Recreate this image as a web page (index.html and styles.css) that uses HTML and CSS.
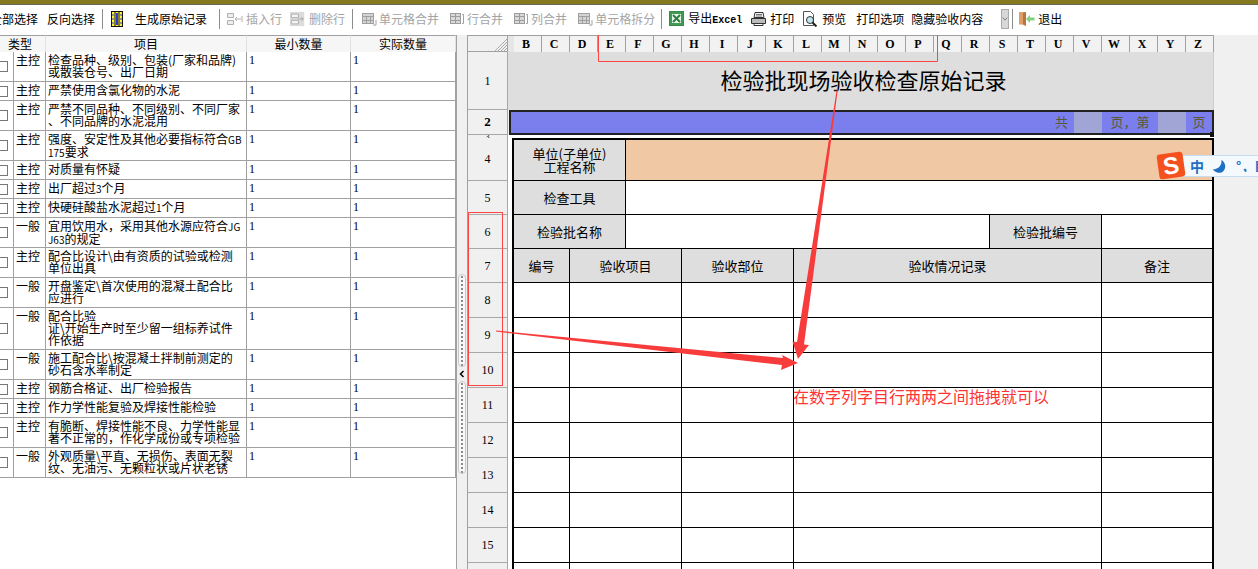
FILE: index.html
```html
<!DOCTYPE html>
<html lang="zh-CN">
<head>
<meta charset="utf-8">
<title>检验批现场验收检查原始记录</title>
<link rel="stylesheet" href="styles.css">
</head>
<body>
<svg class="defs" width="0" height="0">
  <symbol id="i-merge" viewBox="0 0 16 16">
    <rect x="1.500" y="2.500" width="11" height="10" fill="#d4d4d4" stroke="#a0a0a0"/>
    <path d="M1.500 5.500h11M1.500 9.500h11M5.500 5.500v7M9.500 5.500v7" stroke="#a0a0a0" fill="none"/>
    <path d="M15 9v5h-3" stroke="#a0a0a0" fill="none"/>
  </symbol>
  <symbol id="i-grid" viewBox="0 0 16 16">
    <rect x="1.500" y="2.500" width="10" height="10" fill="#d8d8d8" stroke="#9c9c9c"/>
    <path d="M1.500 5.500h10M1.500 9.500h10M6.500 2.500v10" stroke="#9c9c9c" fill="none"/>
    <path d="M13 3.500h1.500v9H13" stroke="#a0a0a0" fill="none"/>
  </symbol>
</svg>

<div class="topbar"></div>

<div class="toolbar">
  <span class="tool first">全部选择</span>
  <span class="tool">反向选择</span>
  <i class="sep"></i>
  <span class="tool">
    <svg class="ico book" viewBox="0 0 12 16"><rect x=".5" y=".5" width="11" height="15" fill="#ffef3a" stroke="#111"/><path d="M4 .5v15M8 .5v15" stroke="#111" fill="none"/><rect x="5" y="2" width="2" height="12" fill="#2a3fd0"/><path d="M1 4h2M1 8h2M1 12h2M9 4h2M9 8h2M9 12h2" stroke="#2a3fd0"/></svg>
    <span class="lbl wide">生成原始记录</span>
  </span>
  <i class="sep sep-b"></i>
  <span class="tool off snug">
    <svg class="ico w18" viewBox="0 0 18 16"><path d="M1.500 2.500h6v4h-6zM1.500 9.500h6v4h-6z" fill="#eee" stroke="#b0b0b0"/><path d="M9 8h6M11 6l-2 2 2 2M16 5v6" stroke="#b0b0b0" fill="none"/></svg>
    插入行
  </span>
  <span class="tool off">
    <svg class="ico" viewBox="0 0 18 16"><rect width="16" height="16" fill="#dcdcdc"/><path d="M1.500 2.500h8v4h-8zM1.500 9.500h8v4h-8z" fill="#f4f4f4" stroke="#a8a8a8"/><path d="M9 8h6M13 6l2 2-2 2" stroke="#a0a0a0" fill="none"/></svg>
    删除行
  </span>
  <i class="sep"></i>
  <span class="tool off snug"><svg class="ico"><use href="#i-merge"/></svg>单元格合并</span>
  <span class="tool off snug far"><svg class="ico"><use href="#i-grid"/></svg>行合并</span>
  <span class="tool off snug far"><svg class="ico"><use href="#i-grid"/></svg>列合并</span>
  <span class="tool off snug far"><svg class="ico"><use href="#i-merge"/></svg>单元格拆分</span>
  <i class="sep sep-d"></i>
  <span class="tool">
    <svg class="ico" viewBox="0 0 16 16"><rect x=".5" y=".5" width="14" height="14" fill="#3f9a54" stroke="#3a8a4c"/><rect x="3" y="3" width="9" height="9" fill="#e8f4ea"/><path d="M4 4l7 7M11 4l-7 7" stroke="#2c7c40" stroke-width="2"/></svg>
    <span>导出<span class="latin">Excel</span></span>
  </span>
  <span class="tool">
    <svg class="ico w17" viewBox="0 0 17 16"><path d="M5 1.500h8l1 5H4z" fill="#f4f4f4" stroke="#333"/><path d="M1.500 7.500h14v5h-14z" fill="#bbb" stroke="#333"/><path d="M4 12.500h9v2H4z" fill="#fff" stroke="#333"/><path d="M6 3.500h6M6 5h6" stroke="#777"/></svg>
    打印
  </span>
  <span class="tool">
    <svg class="ico w17" viewBox="0 0 17 16"><path d="M1.500.5h7l3 3v11h-10z" fill="#fff" stroke="#555"/><circle cx="8" cy="9" r="3.500" fill="#bfe6ec" stroke="#333"/><path d="M10.500 11.500l4 4" stroke="#222" stroke-width="2"/></svg>
    预览
  </span>
  <span class="tool far">打印选项</span>
  <span class="tool tight">隐藏验收内容</span>
  <span class="drop"><svg viewBox="0 0 8 6" width="8" height="6"><path d="M1 1l3 3.500L7 1" fill="none" stroke="#666"/></svg></span>
  <i class="sep sep-c"></i>
  <span class="tool">
    <svg class="ico w17" viewBox="0 0 17 16"><path d="M1 1h7v14l-4-1.500H1z" fill="#dd9e68"/><path d="M5 2l3-1v14l-3-2z" fill="#b8743e"/><path d="M8 8l4-4v2.500h4.500v3H12V12z" fill="#7fd07f"/></svg>
    退出
  </span>
</div>

<main class="main">
  <section class="left">
    <table class="items">
      <colgroup><col class="c0"><col class="c1"><col class="c2"><col class="c3"><col class="c4"></colgroup>
      <thead><tr><th colspan="2" class="th-type">类型</th><th>项目</th><th>最小数量</th><th>实际数量</th></tr></thead>
      <tbody>
        <tr class="r30"><td class="ck"><b></b></td><td>主控</td><td>检查品种、级别、包装(厂家和品牌)<br>或散装仓号、出厂日期</td><td class="n">1</td><td class="n">1</td></tr>
        <tr class="r19"><td class="ck"><b></b></td><td>主控</td><td>严禁使用含氯化物的水泥</td><td class="n">1</td><td class="n">1</td></tr>
        <tr class="r30"><td class="ck"><b></b></td><td>主控</td><td>严禁不同品种、不同级别、不同厂家<br>、不同品牌的水泥混用</td><td class="n">1</td><td class="n">1</td></tr>
        <tr class="r30"><td class="ck"><b></b></td><td>主控</td><td>强度、安定性及其他必要指标符合<span class="sm">GB</span><br><span class="sm">175</span>要求</td><td class="n">1</td><td class="n">1</td></tr>
        <tr class="r19"><td class="ck"><b></b></td><td>主控</td><td>对质量有怀疑</td><td class="n">1</td><td class="n">1</td></tr>
        <tr class="r19"><td class="ck"><b></b></td><td>主控</td><td>出厂超过<span class="sm">3</span>个月</td><td class="n">1</td><td class="n">1</td></tr>
        <tr class="r19"><td class="ck"><b></b></td><td>主控</td><td>快硬硅酸盐水泥超过<span class="sm">1</span>个月</td><td class="n">1</td><td class="n">1</td></tr>
        <tr class="r30"><td class="ck"><b></b></td><td>一般</td><td>宜用饮用水，采用其他水源应符合<span class="sm">JG</span><br><span class="sm">J63</span>的规定</td><td class="n">1</td><td class="n">1</td></tr>
        <tr class="r30"><td class="ck"><b></b></td><td>主控</td><td>配合比设计\由有资质的试验或检测<br>单位出具</td><td class="n">1</td><td class="n">1</td></tr>
        <tr class="r30"><td class="ck"><b></b></td><td>一般</td><td>开盘鉴定\首次使用的混凝土配合比<br>应进行</td><td class="n">1</td><td class="n">1</td></tr>
        <tr class="r42"><td class="ck"><b></b></td><td>一般</td><td>配合比验<br>证\开始生产时至少留一组标养试件<br>作依据</td><td class="n">1</td><td class="n">1</td></tr>
        <tr class="r30"><td class="ck"><b></b></td><td>一般</td><td>施工配合比\按混凝土拌制前测定的<br>砂石含水率制定</td><td class="n">1</td><td class="n">1</td></tr>
        <tr class="r19"><td class="ck"><b></b></td><td>主控</td><td>钢筋合格证、出厂检验报告</td><td class="n">1</td><td class="n">1</td></tr>
        <tr class="r19"><td class="ck"><b></b></td><td>主控</td><td>作力学性能复验及焊接性能检验</td><td class="n">1</td><td class="n">1</td></tr>
        <tr class="r30"><td class="ck"><b></b></td><td>主控</td><td>有脆断、焊接性能不良、力学性能显<br>著不正常的，作化学成份或专项检验</td><td class="n">1</td><td class="n">1</td></tr>
        <tr class="r30"><td class="ck"><b></b></td><td>一般</td><td>外观质量\平直、无损伤、表面无裂<br>纹、无油污、无颗粒状或片状老锈</td><td class="n">1</td><td class="n">1</td></tr>
      </tbody>
    </table>
  </section>

  <div class="split">
    <span class="grip"></span>
    <svg class="chev" viewBox="0 0 6 8" width="6" height="8"><path d="M4.500 1L1.500 4l3 3" fill="none" stroke="#000" stroke-width="1.500"/></svg>
    <span class="grip"></span>
  </div>

  <section class="sheet">
    <div class="corner"><svg viewBox="0 0 12 12" width="12" height="12"><path d="M12 0L0 12M12 3l-9 9M12 6l-6 6M12 9l-3 3" stroke="#aaa" fill="none"/></svg></div>
    <div class="ch a-head"></div>
    <div class="ch">B</div><div class="ch">C</div><div class="ch">D</div><div class="ch">E</div><div class="ch">F</div><div class="ch">G</div><div class="ch">H</div><div class="ch">I</div><div class="ch">J</div><div class="ch">K</div><div class="ch">L</div><div class="ch">M</div><div class="ch">N</div><div class="ch">O</div><div class="ch">P</div><div class="ch">Q</div><div class="ch">R</div><div class="ch">S</div><div class="ch">T</div><div class="ch">U</div><div class="ch">V</div><div class="ch">W</div><div class="ch">X</div><div class="ch">Y</div><div class="ch">Z</div>

    <div class="rh">1</div>
    <div class="title">检验批现场验收检查原始记录</div>

    <div class="rh strong">2</div>
    <div class="bl first-bl s21">共</div>
    <div class="bl light"></div>
    <div class="bl s2">页，第</div>
    <div class="bl light"></div>
    <div class="bl last-bl">页<i class="handle"></i></div>

    <div class="rh tiny">3</div>
    <div class="gap"></div>

    <div class="rh">4</div><div class="a top"></div>
    <div class="c g s4 top two">单位(子单位)<br>工程名称</div>
    <div class="c peach s21 top end"></div>

    <div class="rh">5</div><div class="a"></div>
    <div class="c g s4">检查工具</div>
    <div class="c s21 end"></div>

    <div class="rh">6</div><div class="a"></div>
    <div class="c g s4">检验批名称</div>
    <div class="c s13"></div>
    <div class="c g s4">检验批编号</div>
    <div class="c s4 end"></div>

    <div class="rh">7</div><div class="a"></div>
    <div class="c g s2">编号</div><div class="c g s4">验收项目</div><div class="c g s4">验收部位</div><div class="c g s11">验收情况记录</div><div class="c g s4 end">备注</div>

    <div class="rh">8</div><div class="a"></div>
    <div class="c s2"></div><div class="c s4"></div><div class="c s4"></div><div class="c s11"></div><div class="c s4 end"></div>
    <div class="rh">9</div><div class="a"></div>
    <div class="c s2"></div><div class="c s4"></div><div class="c s4"></div><div class="c s11"></div><div class="c s4 end"></div>
    <div class="rh">10</div><div class="a"></div>
    <div class="c s2"></div><div class="c s4"></div><div class="c s4"></div><div class="c s11"></div><div class="c s4 end"></div>
    <div class="rh">11</div><div class="a"></div>
    <div class="c s2"></div><div class="c s4"></div><div class="c s4"></div><div class="c s11"></div><div class="c s4 end"></div>
    <div class="rh">12</div><div class="a"></div>
    <div class="c s2"></div><div class="c s4"></div><div class="c s4"></div><div class="c s11"></div><div class="c s4 end"></div>
    <div class="rh">13</div><div class="a"></div>
    <div class="c s2"></div><div class="c s4"></div><div class="c s4"></div><div class="c s11"></div><div class="c s4 end"></div>
    <div class="rh">14</div><div class="a"></div>
    <div class="c s2"></div><div class="c s4"></div><div class="c s4"></div><div class="c s11"></div><div class="c s4 end"></div>
    <div class="rh">15</div><div class="a"></div>
    <div class="c s2"></div><div class="c s4"></div><div class="c s4"></div><div class="c s11"></div><div class="c s4 end"></div>
    <div class="rh"></div><div class="a"></div>
    <div class="c s2"></div><div class="c s4"></div><div class="c s4"></div><div class="c s11"></div><div class="c s4 end"></div>
  </section>
</main>

<svg class="marks" viewBox="0 0 1258 569" width="1258" height="569">
  <path d="M598.500 35v26.500h339V35" fill="none" stroke="#f44"/>
  <rect x="468.500" y="212.500" width="34" height="173" fill="none" stroke="#f44"/>
  <polygon points="837,88 797,342 792.500,341.500 798,359 809,345 804,344.500 838,88" fill="#f83c3c"/>
  <polygon points="496,330.500 783,358 782,355 798,363 781,370 782,365 496,331.500" fill="#f83c3c"/>
</svg>
<p class="note">在数字列字目行两两之间拖拽就可以</p>

<div class="ime">
  <span class="ime-logo">S</span>
  <span class="ime-zh">中</span>
  <svg class="ime-moon" viewBox="0 0 16 16" width="15" height="15"><path d="M10 1C11 6 7 11 1 11C3 15 9 16 12 13C16 9 14 3 10 1z" fill="#1f6fc4"/></svg>
  <span class="ime-p">°，目</span>
</div>
</body>
</html>
```

FILE: styles.css
```css
* { box-sizing: border-box; }
html, body { margin: 0; padding: 0; }
body {
  width: 1258px;
  height: 569px;
  overflow: hidden;
  position: relative;
  background: #fff;
  color: #000;
  font: 12px/12px "Noto Sans CJK SC", sans-serif;
}
.defs { position: absolute; }

.topbar {
  height: 5px;
  background: #85791f;
  border-bottom: 1px solid #6a6a55;
}

.toolbar {
  height: 28px;
  display: flex;
  align-items: center;
  background: #fff;
  white-space: nowrap;
  margin-left: -10px;
}
.tool { display: flex; align-items: center; gap: 3px; margin-left: 8px; }
.tool.first { margin-left: 0; margin-right: 1px; }
.tool.far { margin-left: 10px; }
.tool.tight { margin-left: 7px; }
.tool.off { color: #a4a4a4; }
.tool.snug { gap: 2px; }
.ico { width: 16px; height: 16px; flex: none; }
.ico.book { width: 12px; }
.ico.w17 { width: 17px; }
.ico.w18 { width: 18px; }
.lbl.wide { margin-left: 9px; }
.latin { font: 700 10px/12px "Liberation Mono", monospace; }
.sep { width: 1px; height: 20px; background: #8c8c8c; margin: 0 0 0 7px; flex: none; }
.sep-b { margin-left: 12px; }
.sep-b + .tool { margin-left: 6px; }
.sep-c { margin-left: 3px; }
.sep-c + .tool { margin-left: 5px; }
.sep-d { margin-left: 6px; }
.sep-d + .tool { margin-left: 7px; }
.drop {
  width: 8px;
  height: 20px;
  margin-left: 18px;
  background: #d8d8d8;
  border: 1px solid #aaa;
  display: flex;
  align-items: center;
  justify-content: center;
  overflow: hidden;
}

.main {
  display: flex;
  height: 536px;
  margin-top: 2px;
  background: #f0f0f0;
}

.left {
  width: 457px;
  flex: none;
  background: #fff;
  border-right: 1px solid #a0a0a0;
  overflow: hidden;
}
.items {
  table-layout: fixed;
  width: 456px;
  border-collapse: separate;
  border-spacing: 0;
  white-space: nowrap;
}
.c0 { width: 14px; }
.c1 { width: 32px; }
.c2 { width: 201px; }
.c3 { width: 104px; }
.c4 { width: 105px; }
.items th {
  height: 17px;
  padding: 0;
  font-weight: 400;
  background: #f6f6f6;
  border-top: 1px solid #a0a0a0;
  border-right: 1px solid #e2e2e2;
}
.items th.th-type { padding-right: 5px; }
.items td {
  padding: 2px 0 0 2px;
  vertical-align: top;
  border-right: 1px solid #a0a0a0;
  border-bottom: 1px solid #a0a0a0;
  overflow: hidden;
}
.sm { font-size: 10px; }
.r19 td { height: 19px; }
.r30 td { height: 30px; }
.r42 td { height: 42px; }
.items td.ck { padding: 0; vertical-align: middle; }
.ck b { display: block; width: 12px; height: 11px; margin-left: -4px; border: 1px solid #777; background: #fff; }
.items td.n { font-family: "Liberation Serif", serif; padding-left: 2px; }

.split {
  width: 10px;
  flex: none;
  display: flex;
  flex-direction: column;
  align-items: center;
  justify-content: flex-start;
  padding-top: 239px;
  gap: 3px;
}
.grip {
  display: block;
  width: 8px;
  height: 93px;
  background: radial-gradient(circle, #8a8a8a 1.1px, transparent 1.3px) center top / 4px 4px repeat-y #f8f8f8;
  border: 1px solid #c8c8c8;
  border-radius: 4px;
}
.chev { flex: none; }

.sheet {
  flex: none;
  display: grid;
  grid-template-columns: 41px 6px repeat(25, 28px);
  grid-template-rows: 17px 58px 25px 3px 43px 34px 34px 34px repeat(9, 35px);
  align-content: start;
  overflow: hidden;
  height: 534px;
}
.corner {
  background: #f0f0f0;
  border: 1px solid #a0a0a0;
  display: flex;
  align-items: flex-end;
  justify-content: flex-end;
}
.ch {
  background: #f2f2f2;
  border-top: 1px solid #a0a0a0;
  border-right: 1px solid #a0a0a0;
  padding-right: 3px;
  text-align: center;
  font: 700 12px/16px "Liberation Serif", serif;
}
.a-head { border-right: 0; background: #e6e6e6; }
.rh {
  background: #f0f0f0;
  border-left: 1px solid #a0a0a0;
  border-right: 1px solid #a8a8a8;
  border-bottom: 1px solid #a8a8a8;
  display: flex;
  align-items: center;
  justify-content: center;
  font-family: "Liberation Serif", serif;
  overflow: hidden;
}
.rh.strong { font-weight: 700; font-size: 13px; }
.rh.tiny { line-height: 3px; font-size: 8px; border-bottom: 0; }
.title {
  grid-column: span 26;
  background: #dedede;
  border-right: 1px solid #cfcfc8;
  padding-left: 6px;
  text-align: center;
  font-size: 22px;
  line-height: 54px;
}
.bl {
  background: #7b7fee;
  border-top: 2px solid #222;
  border-bottom: 2px solid #222;
  color: #5a5a30;
  font-size: 13px;
  line-height: 20px;
  text-align: center;
  position: relative;
}
.bl.light { background: #a0a5d5; }
.first-bl { text-align: right; padding-right: 6px; border-left: 2px solid #222; margin-left: 1px; }
.last-bl { border-right: 2px solid #222; }
.handle {
  position: absolute;
  right: -3px;
  bottom: -4px;
  width: 5px;
  height: 5px;
  background: #111;
}
.gap { grid-column: span 26; background: #fff; }
.a { background: #fff; border-right: 2px solid #000; }
.c {
  background: #fff;
  border-right: 1px solid #000;
  border-bottom: 1px solid #000;
  display: flex;
  align-items: center;
  justify-content: center;
  text-align: center;
  font-size: 13px;
  line-height: 13px;
}
.c.top { border-top: 2px solid #000; }
.c.g { background: #dedede; }
.c.peach { background: #f0c8a4; }
.c.end { border-right: 2px solid #000; }
.s2 { grid-column: span 2; }
.s4 { grid-column: span 4; }
.s11 { grid-column: span 11; }
.s13 { grid-column: span 13; }
.s21 { grid-column: span 21; }

.marks { position: absolute; left: 0; top: 0; pointer-events: none; }
.note {
  position: absolute;
  left: 793px;
  top: 387px;
  margin: 0;
  color: #f33;
  font-size: 16px;
  line-height: 18px;
  white-space: nowrap;
}

.ime {
  position: absolute;
  left: 1180px;
  top: 155px;
  width: 78px;
  height: 22px;
  background: #f4f9fe;
  border-top: 1px solid #c6dcf0;
  border-bottom: 1px solid #c6dcf0;
  color: #1f6fc4;
  display: flex;
  align-items: center;
  padding-left: 10px;
  white-space: nowrap;
}
.ime-logo {
  position: absolute;
  left: -22px;
  top: -3px;
  width: 26px;
  height: 25px;
  background: #f4511e;
  border-radius: 3px;
  transform: rotate(-8deg);
  color: #fff;
  font: 700 24px/25px "Liberation Sans", sans-serif;
  text-align: center;
}
.ime-zh { font-size: 14px; font-weight: 700; }
.ime-moon { margin-left: 8px; flex: none; }
.ime-p { margin-left: 9px; font-size: 13px; font-weight: 700; overflow: hidden; width: 22px; }
```
